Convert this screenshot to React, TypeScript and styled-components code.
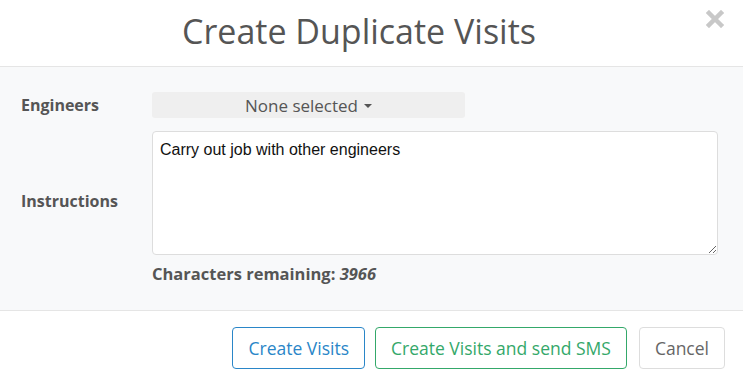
import styled, { createGlobalStyle } from "styled-components";

const GlobalStyle = createGlobalStyle`
    * { box-sizing: border-box; }
    body {
        margin: 0;
        font-family: 'Open Sans', sans-serif;
        color: #555;
        background: #fff;
    }
`;

const Modal = styled.div`
    width: 743px;
    height: 377px;
    display: flex;
    flex-direction: column;
    background: #fff;
`;

const Header = styled.div`
    position: relative;
    height: 67px;
    border-bottom: 1px solid #e5e5e5;
    display: flex;
    align-items: center;
    justify-content: center;
    padding-right: 25px;
`;

const Title = styled.h3`
    margin: 0;
    font-size: 34px;
    font-weight: 400;
    color: #555;
    line-height: 1;
    padding-bottom: 4px;
`;

const Close = styled.button`
    position: absolute;
    right: 19px;
    top: 10px;
    border: none;
    background: none;
    padding: 0;
    cursor: pointer;
    display: flex;
`;

const Body = styled.div`
    flex: 1;
    background: #f8f9fa;
    border-bottom: 1px solid #e5e5e5;
    padding: 25px 25px 0 21px;
    display: grid;
    grid-template-columns: 131px 1fr;
    grid-template-rows: 26px auto;
    row-gap: 13px;
`;

const Label = styled.label<{ $offset?: number }>`
    font-size: 16px;
    font-weight: 700;
    color: #555;
    align-self: ${p => p.$offset ? "start" : "center"};
    margin-top: ${p => p.$offset || 0}px;
`;

const Select = styled.button`
    width: 313px;
    height: 26px;
    border: none;
    border-radius: 3px;
    background: #efefef;
    font-family: 'Open Sans', sans-serif;
    font-size: 17px;
    color: #555;
    display: flex;
    align-items: center;
    justify-content: center;
    gap: 6px;
    padding: 0;
`;

const Caret = styled.span`
    width: 0;
    height: 0;
    border-left: 4px solid transparent;
    border-right: 4px solid transparent;
    border-top: 4px solid #555;
    margin-top: 2px;
`;

const Field = styled.div`
    display: flex;
    flex-direction: column;
`;

const TextArea = styled.textarea`
    width: 566px;
    height: 124px;
    border: 1px solid #ddd;
    border-radius: 4px;
    background: #fff;
    padding: 9px 7px;
    font-family: 'Liberation Sans', Arial, sans-serif;
    font-size: 16px;
    color: #111;
    resize: vertical;
    outline: none;
`;

const Remaining = styled.div`
    margin-top: 7px;
    font-size: 16.5px;
    font-weight: 700;
    color: #555;

    em {
        font-style: italic;
    }
`;

const Footer = styled.div`
    height: 66px;
    display: flex;
    align-items: flex-start;
    justify-content: flex-end;
    gap: 10px;
    padding: 16px 18px 0 0;
`;

const Button = styled.button<{ $tone: string }>`
    height: 42px;
    padding: 0 15px;
    background: #fff;
    border: 1px solid ${p => p.$tone === "cancel" ? "#ddd" : p.$tone};
    border-radius: 4px;
    color: ${p => p.$tone === "cancel" ? "#666" : p.$tone};
    font-family: 'Open Sans', sans-serif;
    font-size: 17.5px;
    cursor: pointer;
`;

const CancelButton = styled(Button)`
    margin-left: 2px;
`;

export default function App() {
    return <Modal>
        <GlobalStyle />
        <Header>
            <Title>Create Duplicate Visits</Title>
            <Close aria-label="Close">
                <svg width="18" height="18" viewBox="0 0 18 18">
                    <path d="M3 3 L15 15 M15 3 L3 15" stroke="#c8c8c8" strokeWidth="4.5" strokeLinecap="square" />
                </svg>
            </Close>
        </Header>
        <Body>
            <Label>Engineers</Label>
            <div>
                <Select>None selected <Caret /></Select>
            </div>
            <Label $offset={59}>Instructions</Label>
            <Field>
                <TextArea defaultValue="Carry out job with other engineers" />
                <Remaining>Characters remaining: <em>3966</em></Remaining>
            </Field>
        </Body>
        <Footer>
            <Button $tone="#2a86c8">Create Visits</Button>
            <Button $tone="#34a86a">Create Visits and send SMS</Button>
            <CancelButton $tone="cancel">Cancel</CancelButton>
        </Footer>
    </Modal>
}
